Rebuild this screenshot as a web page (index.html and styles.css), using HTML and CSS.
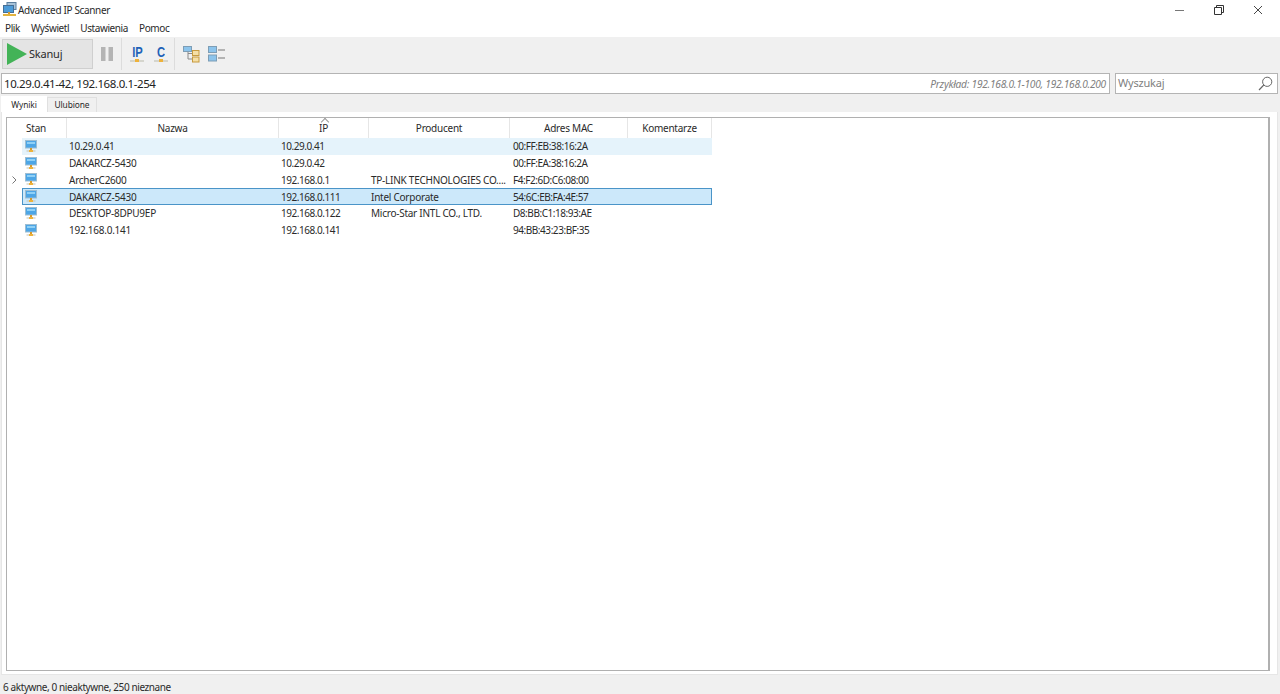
FILE: index.html
```html
<!DOCTYPE html>
<html lang="pl">
<head>
<meta charset="utf-8">
<title>Advanced IP Scanner</title>
<link rel="stylesheet" href="styles.css">
</head>
<body>
<svg class="defs" width="0" height="0" aria-hidden="true">
  <symbol id="pc" viewBox="0 0 12 13">
    <rect x="0.5" y="0.5" width="11" height="7.5" fill="#4da6e6" stroke="#9dbdd2"/>
    <rect x="2" y="2" width="8" height="2" fill="#8fd0f6"/>
    <rect x="5" y="8" width="2" height="3" fill="#d69a2e"/>
    <rect x="1.5" y="10.5" width="9" height="1" fill="#c2c2b4"/>
    <rect x="4" y="10" width="4" height="2" fill="#eeb23a"/>
  </symbol>
</svg>
<div class="titlebar">
  <svg class="appicon" width="14" height="15" viewBox="0 0 14 15">
    <rect x="4" y="0.5" width="9" height="7" fill="#a9c3d8" stroke="#5d7f9e"/>
    <rect x="0.5" y="3.5" width="10" height="7" fill="#4d9bd8" stroke="#456f96"/>
    <rect x="5" y="10" width="2" height="3" fill="#d69a2e"/>
    <rect x="0" y="12" width="13" height="2" fill="#e2b33f"/>
  </svg>
  <span class="apptitle">Advanced IP Scanner</span>
  <div class="winbtns">
    <svg width="10" height="10" viewBox="0 0 10 10"><path d="M0 5.5H9" stroke="#777" stroke-width="1"/></svg>
    <svg width="10" height="10" viewBox="0 0 10 10"><path d="M0.5 2.5H7.5V9.5H0.5Z M2.5 2.5V0.5H9.5V7.5H7.5" fill="none" stroke="#333" stroke-width="1"/></svg>
    <svg width="10" height="10" viewBox="0 0 10 10"><path d="M1 1L9 9M9 1L1 9" stroke="#333" stroke-width="0.9"/></svg>
  </div>
</div>
<nav class="menubar">
  <span>Plik</span><span>Wyświetl</span><span>Ustawienia</span><span>Pomoc</span>
</nav>
<div class="toolbar">
  <button class="scan">
    <svg width="20" height="22" viewBox="0 0 20 22"><path d="M0 0L20 11L0 22Z" fill="#43b357"/></svg>
    <span>Skanuj</span>
  </button>
  <svg class="pause" width="12" height="14" viewBox="0 0 12 14"><rect width="4.5" height="14" fill="#b4b4b4"/><rect x="7.5" width="4.5" height="14" fill="#b4b4b4"/></svg>
  <i class="sep"></i>
  <div class="tool"><b>IP</b><svg width="14" height="4" viewBox="0 0 14 4"><rect y="1.5" width="14" height="1" fill="#b9b9a9"/><rect x="5" y="0" width="4" height="3" fill="#eeb23a"/></svg></div>
  <div class="tool"><b>C</b><svg width="14" height="4" viewBox="0 0 14 4"><rect y="1.5" width="14" height="1" fill="#b9b9a9"/><rect x="5" y="0" width="4" height="3" fill="#eeb23a"/></svg></div>
  <i class="sep second"></i>
  <svg class="tree" width="17" height="17" viewBox="0 0 17 17">
    <path d="M5 6V13H10M5 7.500H10" fill="none" stroke="#8a8a8a"/>
    <rect x="0.5" y="0.5" width="8" height="5" fill="#8cc4ec" stroke="#7d9db5"/>
    <rect x="9.5" y="4.500" width="6.500" height="5" fill="#f5dfa6" stroke="#c79a3e"/>
    <rect x="9.5" y="11" width="6.500" height="5" fill="#f5dfa6" stroke="#c79a3e"/>
  </svg>
  <svg class="list" width="17" height="16" viewBox="0 0 17 16">
    <rect x="0.5" y="0.5" width="8" height="6" fill="#8cc4ec" stroke="#7d9db5"/>
    <rect x="0.5" y="9" width="8" height="6" fill="#8cc4ec" stroke="#7d9db5"/>
    <path d="M10 4H17M10 12H17" stroke="#777" stroke-width="1.2"/>
  </svg>
</div>
<div class="addressbar">
  <div class="range">
    <span class="rangeval">10.29.0.41-42, 192.168.0.1-254</span>
    <span class="hint">Przykład: 192.168.0.1-100, 192.168.0.200</span>
  </div>
  <div class="search">
    <span class="searchtext">Wyszukaj</span>
    <svg width="15" height="15" viewBox="0 0 15 15"><circle cx="9.2" cy="5.8" r="4.6" fill="none" stroke="#666"/><path d="M5.8 9L1 14" stroke="#666" stroke-width="1.1"/></svg>
  </div>
</div>
<div class="tabs">
  <span class="tab active">Wyniki</span>
  <span class="tab">Ulubione</span>
</div>
<main class="panel">
  <div class="results">
    <div class="row head">
      <i class="gutter"></i>
      <div class="cells">
        <span>Stan</span><span>Nazwa</span><span class="sorted">IP</span><span>Producent</span><span>Adres MAC</span><span>Komentarze</span>
      </div>
    </div>
    <div class="row">
      <i class="gutter"></i>
      <div class="cells hover">
        <span><svg width="12" height="13"><use href="#pc"/></svg></span><span>10.29.0.41</span><span>10.29.0.41</span><span></span><span>00:FF:EB:38:16:2A</span><span></span>
      </div>
    </div>
    <div class="row">
      <i class="gutter"></i>
      <div class="cells">
        <span><svg width="12" height="13"><use href="#pc"/></svg></span><span>DAKARCZ-5430</span><span>10.29.0.42</span><span></span><span>00:FF:EA:38:16:2A</span><span></span>
      </div>
    </div>
    <div class="row">
      <i class="gutter"><svg width="5" height="8" viewBox="0 0 5 8"><path d="M0.5 0.5L4 4L0.5 7.5" fill="none" stroke="#777"/></svg></i>
      <div class="cells">
        <span><svg width="12" height="13"><use href="#pc"/></svg></span><span>ArcherC2600</span><span>192.168.0.1</span><span>TP-LINK TECHNOLOGIES CO....</span><span>F4:F2:6D:C6:08:00</span><span></span>
      </div>
    </div>
    <div class="row">
      <i class="gutter"></i>
      <div class="cells selected">
        <span><svg width="12" height="13"><use href="#pc"/></svg></span><span>DAKARCZ-5430</span><span>192.168.0.111</span><span>Intel Corporate</span><span>54:6C:EB:FA:4E:57</span><span></span>
      </div>
    </div>
    <div class="row">
      <i class="gutter"></i>
      <div class="cells">
        <span><svg width="12" height="13"><use href="#pc"/></svg></span><span>DESKTOP-8DPU9EP</span><span>192.168.0.122</span><span>Micro-Star INTL CO., LTD.</span><span>D8:BB:C1:18:93:AE</span><span></span>
      </div>
    </div>
    <div class="row">
      <i class="gutter"></i>
      <div class="cells">
        <span><svg width="12" height="13"><use href="#pc"/></svg></span><span>192.168.0.141</span><span>192.168.0.141</span><span></span><span>94:BB:43:23:BF:35</span><span></span>
      </div>
    </div>
  </div>
</main>
<footer class="status">6 aktywne, 0 nieaktywne, 250 nieznane</footer>
</body>
</html>
```
FILE: styles.css
```css
* { box-sizing: border-box; }
html, body { height: 100%; }
body {
  margin: 0;
  height: 694px;
  overflow: hidden;
  display: flex;
  flex-direction: column;
  background: #f0f0f0;
  color: #2a2a2a;
  letter-spacing: -0.25px;
  font: 10px/14px "Noto Sans", "Open Sans", sans-serif;
}
.defs { position: absolute; }
.titlebar {
  height: 19px;
  flex: none;
  background: #fff;
  display: flex;
  align-items: center;
  padding-left: 3px;
}
.appicon { margin-right: 1px; }
.apptitle { letter-spacing: -0.35px; }
.winbtns {
  margin-left: auto;
  display: flex;
  gap: 29px;
  padding-right: 17px;
  align-items: center;
}
.menubar {
  height: 18px;
  flex: none;
  background: #fff;
  display: flex;
  align-items: center;
  gap: 11px;
  padding-left: 5px;
  letter-spacing: -0.4px;
}
.toolbar {
  height: 34px;
  flex: none;
  display: flex;
  align-items: center;
  padding-left: 2px;
  background: #f0f0f0;
}
.scan {
  width: 91px;
  height: 30px;
  padding: 0 0 0 4px;
  display: flex;
  align-items: center;
  gap: 2px;
  border: 1px solid #cfcfcf;
  background: #e4e4e4;
  color: #2a2a2a;
  font: 11px/14px "Noto Sans", "Open Sans", sans-serif;
  letter-spacing: -0.2px;
}
.pause { margin-left: 8px; }
.sep {
  width: 1px;
  height: 32px;
  margin-left: 8px;
  background: #dcdcdc;
}
.sep.second { margin-left: 4px; }
.tool {
  margin-left: 8px;
  width: 14px;
  display: flex;
  flex-direction: column;
  align-items: center;
  margin-right: 2px;
}
.tool b {
  font: 700 14px/13px "Liberation Sans", sans-serif;
  color: #1f63b8;
  transform: scaleX(0.8);
}
.tool svg { display: block; }
.tree { margin-left: 8px; }
.list { margin-left: 8px; }
.addressbar {
  height: 25px;
  flex: none;
  display: flex;
  padding: 2px 2px 2px 1px;
  gap: 5px;
}
.range, .search {
  height: 21px;
  background: #fff;
  border: 1px solid #b4b4b4;
  display: flex;
  align-items: center;
  justify-content: space-between;
}
.range {
  flex: 1;
  padding: 0 3px 0 2px;
}
.rangeval { font-size: 11.5px; letter-spacing: -0.4px; color: #222; }
.hint {
  font-size: 10.2px;
  font-style: italic;
  color: #808080;
}
.search {
  width: 163px;
  padding: 0 4px 0 2px;
  font-size: 11px;
  letter-spacing: -0.2px;
  color: #808080;
}
.searchtext { padding-bottom: 1px; }
.tabs {
  height: 16px;
  flex: none;
  display: flex;
  padding-left: 1px;
  align-items: flex-end;
}
.tab {
  height: 15px;
  display: flex;
  align-items: center;
  justify-content: center;
  width: 50px;
  background: #f0f0f0;
  border: 1px solid #e0e0e0;
  border-bottom: none;
  font-size: 8.4px;
  letter-spacing: -0.1px;
}
.tab.active {
  width: 46px;
  height: 16px;
  background: #fff;
  border-color: #fff;
}
.panel {
  height: 563px;
  flex: none;
  margin: 0 2px 0 1px;
  padding: 5px 7px 3px 4px;
  background: #fff;
  border: 1px solid #e6e6e6;
  border-top: none;
  display: flex;
}
.results {
  flex: 1;
  border: 1px solid #b0b0b0;
  border-right-width: 2px;
  background: #fff;
  padding-left: 15px;
}
.row {
  height: 16.75px;
  display: flex;
  margin-left: -15px;
}
.row.head { height: 20px; }
.gutter {
  width: 15px;
  flex: none;
  display: flex;
  align-items: center;
  padding-left: 5px;
}
.cells {
  width: 690px;
  flex: none;
  display: grid;
  grid-template-columns: 45px 212px 90px 141px 118px 84px;
  align-items: center;
}
.cells > span {
  padding-left: 2px;
  white-space: nowrap;
  overflow: hidden;
}
.cells > span:nth-child(3),
.cells > span:nth-child(5) { letter-spacing: -0.45px; }
.cells > span:nth-child(5) { padding-left: 3px; }
.cells > span:first-child { padding-left: 3px; line-height: 0; }
.head .cells > span {
  height: 20px;
  line-height: 20px;
  padding: 0;
  text-align: center;
  letter-spacing: -0.25px;
  border-right: 1px solid #e6e6e6;
  position: relative;
}
.head .cells > span:first-child { line-height: 20px; padding-right: 16px; }
.sorted::before {
  content: "";
  position: absolute;
  left: 43px;
  top: 1px;
  width: 5px;
  height: 5px;
  border-top: 1px solid #999;
  border-left: 1px solid #999;
  transform: rotate(45deg);
}
.hover { background: #e5f3fb; }
.selected {
  background: #cce8fa;
  box-shadow: inset 0 0 0 1px #4a94c8;
}
.status {
  flex: 1;
  display: flex;
  align-items: center;
  padding: 5px 0 0 3px;
  letter-spacing: -0.4px;
}
```
